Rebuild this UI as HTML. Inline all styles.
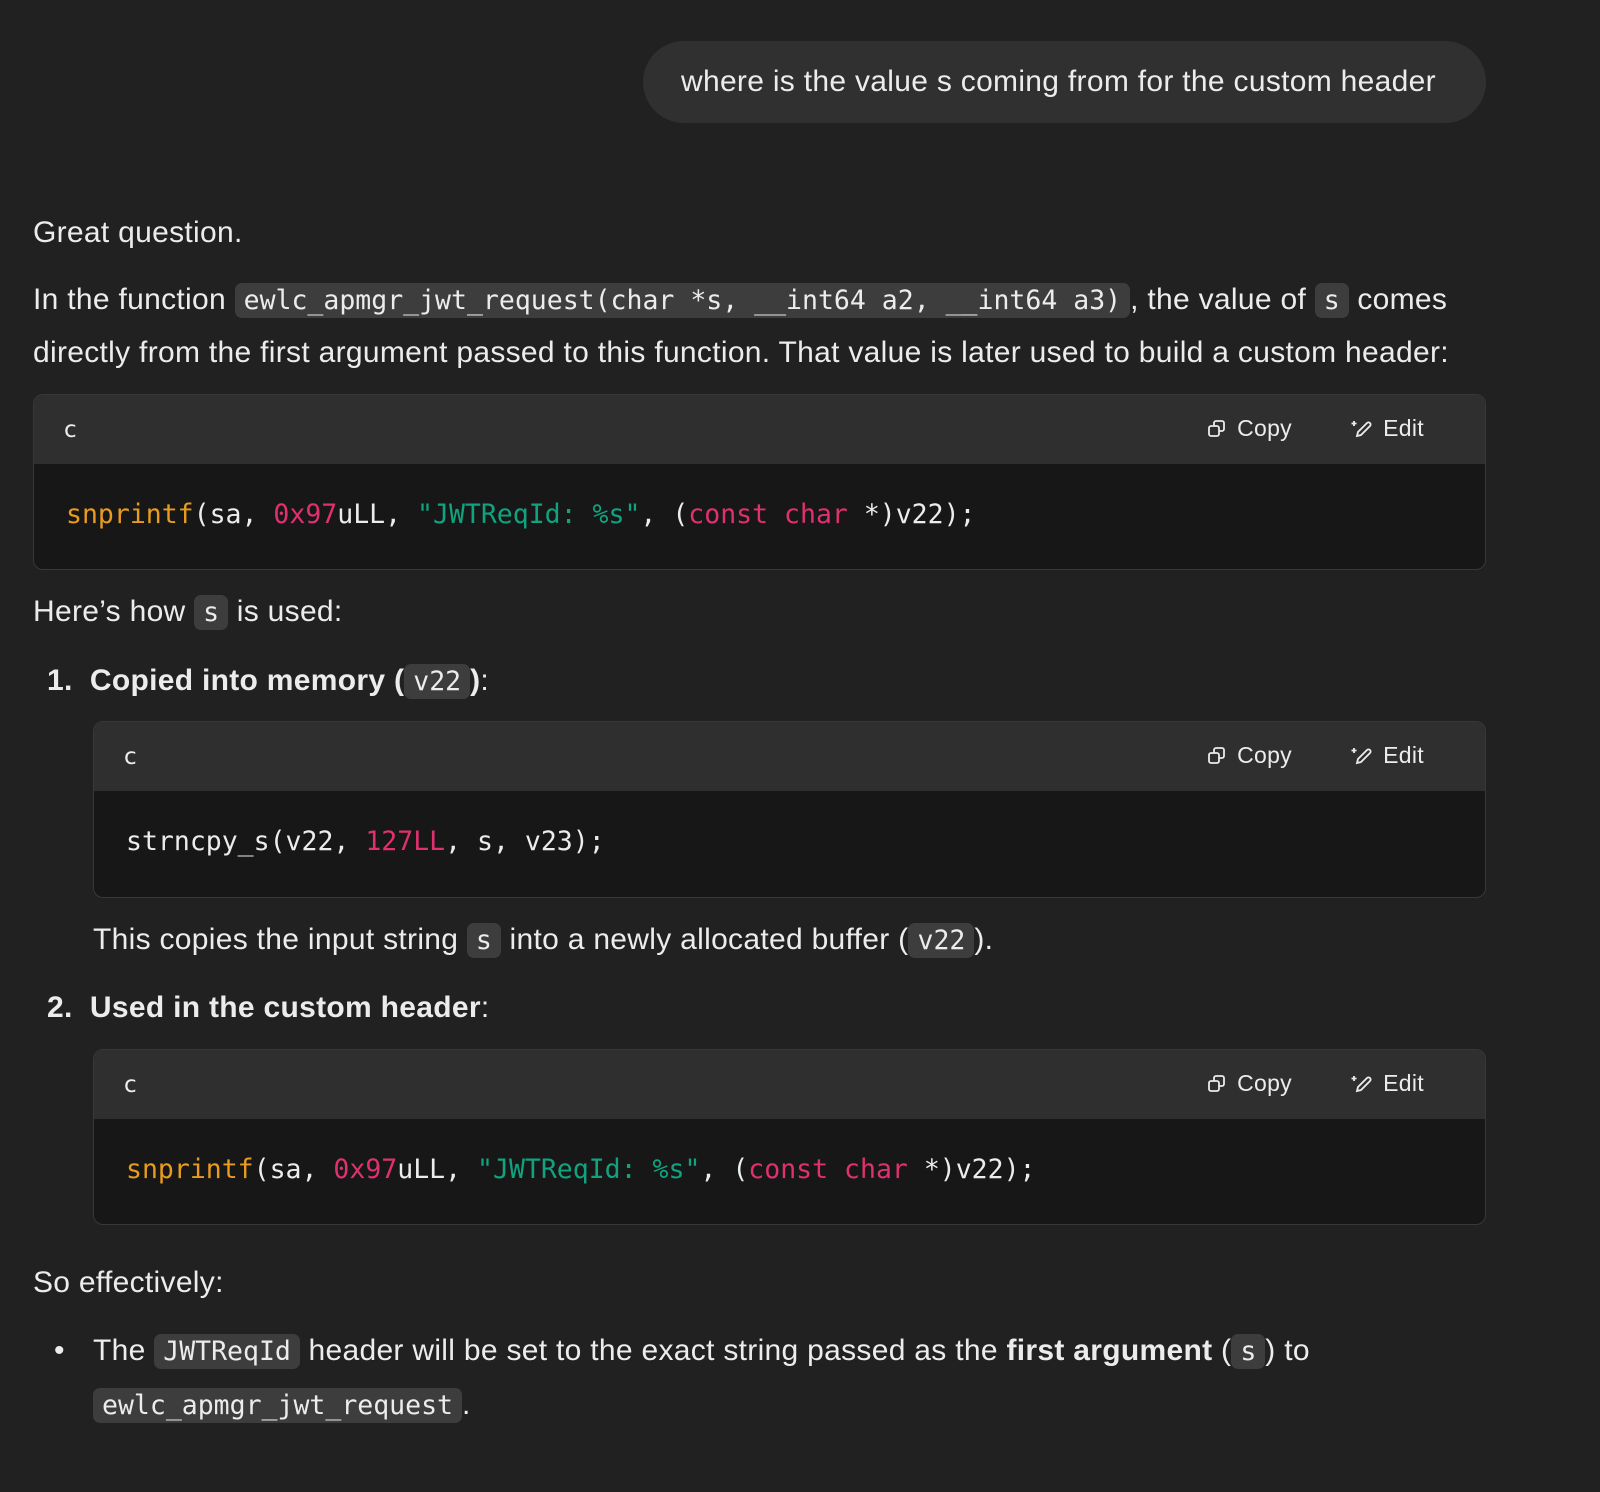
<!DOCTYPE html>
<html><head><meta charset="utf-8"><style>
*{margin:0;padding:0;box-sizing:border-box}
body{width:1600px;height:1492px;background:#212121;color:#ececec;font-family:"Liberation Sans",sans-serif;font-size:30px;letter-spacing:0.3px;position:relative;overflow:hidden}
.a{position:absolute;white-space:nowrap;line-height:40px}
code{font-family:"DejaVu Sans Mono",monospace;font-size:26.5px;letter-spacing:0;background:#3d3d3d;border-radius:7px;padding:2px 9px;color:#ececec}
.bubble{position:absolute;left:643px;top:41px;width:843px;height:82px;border-radius:41px;background:#303030;padding-left:38px;line-height:82px;font-size:30px}
.cb{position:absolute;right:114px;border:1px solid #383838;border-radius:10px;overflow:hidden;background:#171717;letter-spacing:0}
.cb .h{height:69px;background:#2f2f2f;position:relative;font-size:23px;letter-spacing:0.3px}
.cb .h .l{position:absolute;left:30px;top:22px;font-family:"DejaVu Sans",sans-serif}
.cb .h .c{position:absolute;right:193px;top:20px;display:flex;align-items:center;gap:10px}
.cb .h .e{position:absolute;right:61px;top:20px;display:flex;align-items:center;gap:10px}
.cb .b{height:102px;font-family:"DejaVu Sans Mono",monospace;font-size:26.5px;line-height:102px;padding-left:32px;white-space:pre}
.o{color:#e99b1f}.p{color:#e0306f}.g{color:#10a37f}
b{font-weight:700}
</style></head><body>
<div class="bubble">where is the value s coming from for the custom header</div>

<div class="a" style="left:33px;top:213px">Great question.</div>
<div class="a" style="left:33px;top:280px">In the function <code>ewlc_apmgr_jwt_request(char *s, __int64 a2, __int64 a3)</code>, the value of <code>s</code> comes</div>
<div class="a" style="left:33px;top:333px">directly from the first argument passed to this function. That value is later used to build a custom header:</div>

<div class="cb" style="left:33px;top:394px;height:176px">
<div class="h"><span class="l">c</span>
<span class="c"><svg width="20" height="20" viewBox="0 0 20 20" fill="none" stroke="#ececec" stroke-width="1.8"><rect x="2" y="7" width="10" height="10" rx="2"/><path d="M7 7V4a2 2 0 0 1 2-2h6a2 2 0 0 1 2 2v6a2 2 0 0 1-2 2h-3"/></svg>Copy</span>
<span class="e"><svg width="22" height="20" viewBox="0 0 22 20" fill="none" stroke="#ececec" stroke-width="1.8"><path d="M6 17l1-4 9-9a2 2 0 0 1 3 3l-9 9z"/><path d="M3 2v5M0.5 4.5h5"/></svg>Edit</span></div>
<div class="b"><span class="o">snprintf</span>(sa, <span class="p">0x97</span>uLL, <span class="g">"JWTReqId: %s"</span>, (<span class="p">const</span> <span class="p">char</span> *)v22);</div>
</div>

<div class="a" style="left:33px;top:592px">Here’s how <code>s</code> is used:</div>
<div class="a" style="left:47px;top:661px"><b>1.&nbsp; Copied into memory (<code style="font-weight:400">v22</code>)</b>:</div>

<div class="cb" style="left:93px;top:721px;height:177px">
<div class="h"><span class="l">c</span>
<span class="c"><svg width="20" height="20" viewBox="0 0 20 20" fill="none" stroke="#ececec" stroke-width="1.8"><rect x="2" y="7" width="10" height="10" rx="2"/><path d="M7 7V4a2 2 0 0 1 2-2h6a2 2 0 0 1 2 2v6a2 2 0 0 1-2 2h-3"/></svg>Copy</span>
<span class="e"><svg width="22" height="20" viewBox="0 0 22 20" fill="none" stroke="#ececec" stroke-width="1.8"><path d="M6 17l1-4 9-9a2 2 0 0 1 3 3l-9 9z"/><path d="M3 2v5M0.5 4.5h5"/></svg>Edit</span></div>
<div class="b">strncpy_s(v22, <span class="p">127LL</span>, s, v23);</div>
</div>

<div class="a" style="left:93px;top:920px">This copies the input string <code>s</code> into a newly allocated buffer (<code>v22</code>).</div>
<div class="a" style="left:47px;top:988px"><b>2.&nbsp; Used in the custom header</b>:</div>

<div class="cb" style="left:93px;top:1049px;height:176px">
<div class="h"><span class="l">c</span>
<span class="c"><svg width="20" height="20" viewBox="0 0 20 20" fill="none" stroke="#ececec" stroke-width="1.8"><rect x="2" y="7" width="10" height="10" rx="2"/><path d="M7 7V4a2 2 0 0 1 2-2h6a2 2 0 0 1 2 2v6a2 2 0 0 1-2 2h-3"/></svg>Copy</span>
<span class="e"><svg width="22" height="20" viewBox="0 0 22 20" fill="none" stroke="#ececec" stroke-width="1.8"><path d="M6 17l1-4 9-9a2 2 0 0 1 3 3l-9 9z"/><path d="M3 2v5M0.5 4.5h5"/></svg>Edit</span></div>
<div class="b"><span class="o">snprintf</span>(sa, <span class="p">0x97</span>uLL, <span class="g">"JWTReqId: %s"</span>, (<span class="p">const</span> <span class="p">char</span> *)v22);</div>
</div>

<div class="a" style="left:33px;top:1263px">So effectively:</div>
<div class="a" style="left:54px;top:1331px">•</div>
<div class="a" style="left:93px;top:1331px">The <code>JWTReqId</code> header will be set to the exact string passed as the <b>first argument</b> (<code>s</code>) to</div>
<div class="a" style="left:93px;top:1385px"><code>ewlc_apmgr_jwt_request</code>.</div>
</body></html>
